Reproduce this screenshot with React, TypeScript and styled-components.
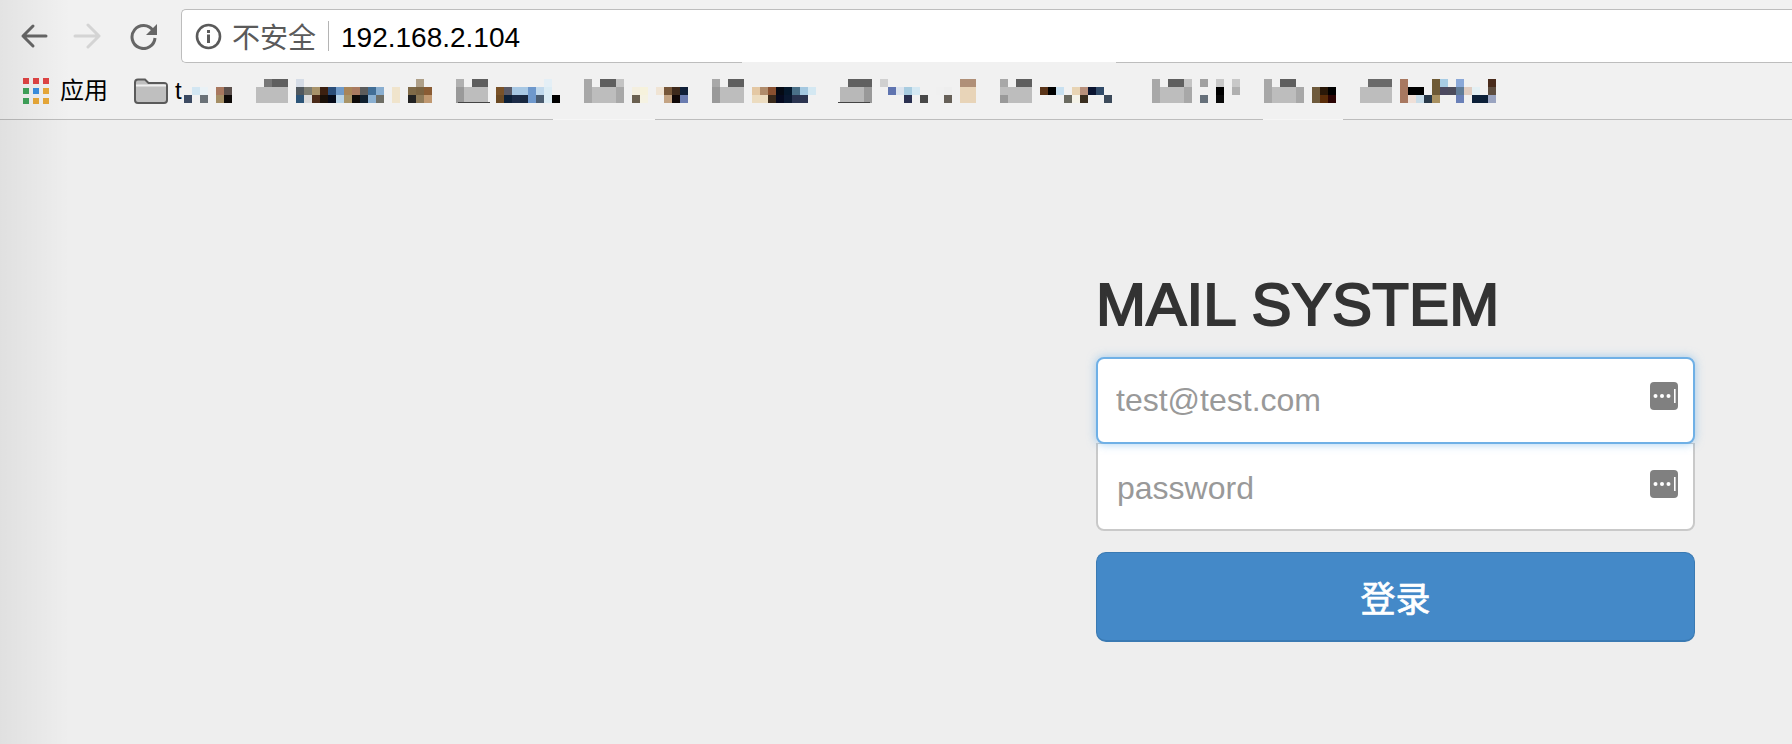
import React, { FunctionComponent } from "react";
import styled, { createGlobalStyle } from "styled-components";

const SANS = `"Liberation Sans", "Noto Sans CJK SC", sans-serif`;

const GlobalStyle = createGlobalStyle`
	html,
	body {
		margin: 0;
		padding: 0;
		height: 100%;
		background: #eeeeee;
		overflow: hidden;
	}
	#root {
		height: 100%;
	}
`;

const Window = styled.div`
	position: relative;
	width: 1792px;
	height: 744px;
	overflow: hidden;
	font-family: ${SANS};
	background: #eeeeee;
`;
const EdgeShade = styled.div`
	position: absolute;
	top: 0;
	left: 0;
	bottom: 0;
	width: 70px;
	background: linear-gradient(to right, rgba(0, 0, 0, 0.06), rgba(0, 0, 0, 0));
	pointer-events: none;
`;
const Chrome = styled.header`
	background: #f1f1f1;
`;
const Toolbar = styled.div`
	display: flex;
	align-items: center;
	height: 72px;
	box-sizing: border-box;
	padding: 9px 0 9px 20px;
`;
const NavButton = styled.span<{ $gap: number }>`
	display: flex;
	margin-right: ${(p) => p.$gap}px;
`;
const AddressBar = styled.div`
	position: relative;
	flex: 1;
	display: flex;
	align-items: center;
	height: 54px;
	box-sizing: border-box;
	padding-left: 13px;
	margin-right: -8px;
	background: #fff;
	border: 1px solid #bdbdbd;
	border-right: none;
	border-radius: 5px 0 0 5px;
`;
const BorderSmudge = styled.span`
	position: absolute;
	left: 560px;
	bottom: -1px;
	width: 374px;
	height: 1px;
	background: #f1f1f1;
`;
const SecurityLabel = styled.span`
	margin-left: 10px;
	font-size: 28px;
	color: #5a5a5a;
`;
const Divider = styled.span`
	width: 1px;
	height: 30px;
	margin: 0 12px;
	background: #b4b4b4;
`;
const UrlText = styled.span`
	margin-top: 3px;
	font-size: 28px;
	color: #000;
`;
const BookmarkBar = styled.div`
	display: flex;
	align-items: center;
	height: 47px;
	box-sizing: border-box;
	padding: 0 0 10px 23px;
`;
const AppsGrid = styled.div`
	display: grid;
	grid-template-columns: repeat(3, 6px);
	grid-auto-rows: 6px;
	gap: 4px;
	margin-right: 11px;
`;
const AppsDot = styled.i<{ $color: string }>`
	display: block;
	background: ${(p) => p.$color};
`;
const BookmarkLabel = styled.span<{ $gap: number }>`
	font-size: 24px;
	line-height: 28px;
	color: #000;
	margin-right: ${(p) => p.$gap}px;
`;
const FolderIcon = styled.svg`
	flex: none;
	margin-right: 7px;
`;
const Pixelated = styled.svg`
	flex: none;
`;
const BottomRule = styled.div`
	display: flex;
	height: 1px;
`;
const RuleSegment = styled.span<{ $width?: number; $gone?: boolean }>`
	flex: ${(p) => (p.$width ? `0 0 ${p.$width}px` : "1")};
	background: ${(p) => (p.$gone ? "#f6f6f6" : "#bdbdbd")};
`;
const Main = styled.main`
	display: flex;
	justify-content: flex-end;
	padding: 152px 97px 0 0;
`;
const SignIn = styled.form`
	width: 599px;
	margin: 0;
`;
const Heading = styled.h2`
	margin: 0 0 19px;
	font-size: 60px;
	line-height: 66px;
	font-weight: 400;
	letter-spacing: 0.2px;
	color: #333;
	-webkit-text-stroke: 2px #333;
`;
const Field = styled.div`
	position: relative;
`;
const Input = styled.input<{ $focused?: boolean }>`
	display: block;
	width: 100%;
	height: ${(p) => (p.$focused ? 87 : 88)}px;
	box-sizing: border-box;
	padding: ${(p) => (p.$focused ? "0 18px" : "4px 19px 0")};
	margin-top: ${(p) => (p.$focused ? 0 : -1)}px;
	font-family: ${SANS};
	font-size: 32px;
	color: #555;
	background: #fff;
	outline: none;
	border: 2px solid ${(p) => (p.$focused ? "#6fb0e6" : "#c9c9c9")};
	border-radius: ${(p) => (p.$focused ? "8px" : "0 0 8px 8px")};
	${(p) =>
		p.$focused
			? "position: relative; z-index: 1; box-shadow: 0 0 10px rgba(102, 175, 233, 0.6);"
			: "border-top-width: 1px;"}
	&::placeholder {
		color: #999;
		opacity: 1;
	}
`;
const KeyBadge = styled.svg<{ $top: number }>`
	position: absolute;
	z-index: 2;
	top: ${(p) => p.$top}px;
	right: 17px;
`;
const SubmitButton = styled.button`
	display: block;
	width: 100%;
	height: 90px;
	margin-top: 21px;
	font-family: ${SANS};
	font-size: 35px;
	font-weight: 400;
	color: #fff;
	-webkit-text-stroke: 0.7px #fff;
	background: #4489c8;
	border: 1px solid #3a7ab3;
	border-bottom-width: 2px;
	border-radius: 10px;
`;

type Cell = [number, number, string];

// x in page pixels, row 0/1/2 of the 8px mosaic, starts at y 78
const MOSAIC_LEFT = 184;
const MOSAIC: Cell[] = [
	[184, 2, "#3c4a62"], [192, 1, "#d2e6f2"], [200, 1, "#eaf2f6"], [200, 2, "#6b7278"],
	[216, 1, "#a9785f"], [216, 2, "#a58f66"], [224, 1, "#5c504c"], [224, 2, "#0e0a08"],
	[264, 0, "#777777"], [272, 0, "#5f5f5f"], [280, 0, "#5f5f5f"],
	[256, 1, "#bdbdbd"], [264, 1, "#bdbdbd"], [272, 1, "#bdbdbd"], [280, 1, "#bdbdbd"],
	[256, 2, "#bdbdbd"], [264, 2, "#bdbdbd"], [272, 2, "#bdbdbd"], [280, 2, "#bdbdbd"],
	[296, 0, "#d5dce6"], [296, 1, "#50585e"], [296, 2, "#2d5578"],
	[304, 1, "#7d7d72"], [304, 2, "#dadada"], [312, 1, "#a8936a"], [312, 2, "#4a2a18"],
	[320, 1, "#3c2010"], [320, 2, "#1a1008"], [328, 1, "#2a4d78"], [328, 2, "#050a18"],
	[336, 1, "#6f9ac8"], [336, 2, "#b8d4e8"], [344, 1, "#a98558"], [344, 2, "#a89468"],
	[352, 1, "#aa7a60"], [352, 2, "#0e0a08"], [360, 1, "#5c5c5c"], [360, 2, "#10202f"],
	[368, 1, "#426e96"], [368, 2, "#8aafd0"], [376, 1, "#89aed0"], [376, 2, "#6e6e66"],
	[392, 1, "#f0e4cc"], [392, 2, "#f0e4cc"], [408, 1, "#7f6a48"], [408, 2, "#222222"],
	[416, 0, "#ae9f88"], [416, 1, "#7a6341"], [416, 2, "#8e7a58"], [424, 1, "#8a5c34"], [424, 2, "#c09870"],
	[456, 0, "#b0b0b0"], [456, 1, "#999999"], [456, 2, "#999999"],
	[464, 1, "#bdbdbd"], [464, 2, "#bdbdbd"], [472, 0, "#5e5e5e"], [472, 1, "#bdbdbd"], [472, 2, "#bdbdbd"],
	[480, 0, "#5e5e5e"], [480, 1, "#bdbdbd"], [480, 2, "#bdbdbd"],
	[496, 1, "#7a5228"], [496, 2, "#6b4a24"], [504, 1, "#5a5a66"], [504, 2, "#0c2038"],
	[512, 1, "#a8c8e4"], [512, 2, "#1c2c48"], [520, 1, "#a8c8e4"], [520, 2, "#182840"],
	[528, 1, "#6e98cc"], [528, 2, "#6e98cc"], [536, 1, "#c0d8ec"], [536, 2, "#4a5c70"],
	[544, 0, "#e4eff6"], [544, 1, "#dcecf4"], [544, 2, "#dcecf4"], [552, 2, "#000000"],
	[584, 0, "#a8a8a8"], [584, 1, "#a8a8a8"], [584, 2, "#a8a8a8"],
	[592, 1, "#bdbdbd"], [592, 2, "#bdbdbd"], [600, 0, "#5f5f5f"], [600, 1, "#bdbdbd"], [600, 2, "#bdbdbd"],
	[608, 0, "#5f5f5f"], [608, 1, "#bdbdbd"], [608, 2, "#bdbdbd"],
	[616, 0, "#c4c4c4"], [616, 1, "#a8a8a8"], [616, 2, "#a8a8a8"],
	[632, 1, "#f4efdf"], [632, 2, "#6a6050"], [640, 1, "#f6f2dc"], [640, 2, "#f5f2e2"],
	[656, 1, "#f0e4d4"], [664, 1, "#77573a"], [664, 2, "#c4a484"], [672, 1, "#3e2a1c"], [672, 2, "#100808"],
	[680, 1, "#102038"], [680, 2, "#6a7cb0"],
	[712, 0, "#a8a8a8"], [712, 1, "#999999"], [712, 2, "#999999"],
	[720, 1, "#bdbdbd"], [720, 2, "#bdbdbd"], [728, 0, "#5f5f5f"], [728, 1, "#bdbdbd"], [728, 2, "#bdbdbd"],
	[736, 0, "#5f5f5f"], [736, 1, "#bdbdbd"], [736, 2, "#bdbdbd"],
	[752, 1, "#e4c8a4"], [752, 2, "#ecdcc0"], [760, 1, "#b08c6c"], [760, 2, "#ecdcc0"],
	[768, 1, "#8a5030"], [768, 2, "#3a2a1c"], [776, 1, "#050a14"], [776, 2, "#050a20"],
	[784, 1, "#05182c"], [784, 2, "#0a1830"], [792, 1, "#4a7088"], [792, 2, "#2a3450"],
	[800, 1, "#a4c8e0"], [800, 2, "#2c3450"], [808, 1, "#d4e8f2"],
	[848, 0, "#606060"], [856, 0, "#606060"], [864, 0, "#606060"],
	[840, 1, "#b8b8b8"], [848, 1, "#b8b8b8"], [856, 1, "#b8b8b8"], [864, 1, "#999999"],
	[840, 2, "#b8b8b8"], [848, 2, "#b8b8b8"], [856, 2, "#b8b8b8"], [864, 2, "#999999"],
	[880, 0, "#d0d0d0"], [888, 1, "#5f74b0"], [896, 1, "#dce4ee"], [904, 1, "#a8cce0"], [904, 2, "#2a3050"],
	[912, 1, "#d4e8f2"], [920, 2, "#484848"], [936, 1, "#f0f0f0"], [944, 2, "#666058"], [944, 1, "#eeeeee"],
	[960, 0, "#b09078"], [960, 1, "#e8d4b8"], [960, 2, "#e8d4b8"], [968, 0, "#b09078"], [968, 1, "#e8d4b8"], [968, 2, "#e8d4b8"],
	[1000, 0, "#a8a8a8"], [1000, 1, "#bdbdbd"], [1000, 2, "#999999"],
	[1008, 1, "#bdbdbd"], [1008, 2, "#bdbdbd"], [1016, 0, "#5f5f5f"], [1016, 1, "#bdbdbd"], [1016, 2, "#bdbdbd"],
	[1024, 0, "#5f5f5f"], [1024, 1, "#bdbdbd"], [1024, 2, "#bdbdbd"],
	[1040, 1, "#5a3418"], [1048, 1, "#000000"], [1056, 1, "#c8e0f0"], [1064, 2, "#6a6a60"],
	[1072, 1, "#e8d4b4"], [1072, 2, "#f4f2e8"], [1080, 1, "#b8907c"], [1080, 2, "#3a2e20"],
	[1088, 1, "#0a1430"], [1096, 1, "#304a68"], [1104, 2, "#3c4a5a"],
	[1152, 0, "#a8a8a8"], [1152, 1, "#a8a8a8"], [1152, 2, "#a8a8a8"],
	[1160, 1, "#bdbdbd"], [1160, 2, "#bdbdbd"], [1168, 0, "#5f5f5f"], [1168, 1, "#bdbdbd"], [1168, 2, "#bdbdbd"],
	[1176, 0, "#5f5f5f"], [1176, 1, "#bdbdbd"], [1176, 2, "#bdbdbd"],
	[1184, 0, "#c4c4c4"], [1184, 1, "#a8a8a8"], [1184, 2, "#a8a8a8"],
	[1200, 0, "#a0a0a0"], [1200, 2, "#66707a"], [1216, 0, "#c8c8c8"], [1216, 1, "#000000"], [1216, 2, "#0a0a0a"],
	[1232, 0, "#c8c8c8"], [1232, 1, "#b0b0b0"],
	[1264, 0, "#a8a8a8"], [1264, 1, "#a8a8a8"], [1264, 2, "#a8a8a8"],
	[1272, 1, "#bdbdbd"], [1272, 2, "#bdbdbd"], [1280, 0, "#5f5f5f"], [1280, 1, "#bdbdbd"], [1280, 2, "#bdbdbd"],
	[1288, 0, "#5f5f5f"], [1288, 1, "#bdbdbd"], [1288, 2, "#bdbdbd"], [1296, 1, "#a8a8a8"], [1296, 2, "#a8a8a8"],
	[1312, 1, "#6e5a3c"], [1312, 2, "#6e5a3c"], [1320, 1, "#2a1808"], [1320, 2, "#5a2c08"], [1328, 1, "#000000"], [1328, 2, "#2a0404"],
	[1368, 0, "#6a6a6a"], [1376, 0, "#6a6a6a"], [1384, 0, "#6a6a6a"],
	[1360, 1, "#bdbdbd"], [1368, 1, "#bdbdbd"], [1376, 1, "#bdbdbd"], [1384, 1, "#bdbdbd"],
	[1360, 2, "#bdbdbd"], [1368, 2, "#bdbdbd"], [1376, 2, "#bdbdbd"], [1384, 2, "#bdbdbd"],
	[1400, 0, "#a87860"], [1400, 1, "#a87860"], [1400, 2, "#a87860"], [1408, 1, "#000000"], [1408, 2, "#efe0d8"],
	[1416, 1, "#000000"], [1416, 2, "#c8dce8"], [1424, 2, "#283848"],
	[1432, 0, "#6e5a36"], [1432, 1, "#6e5a36"], [1432, 2, "#a89060"], [1440, 0, "#a8cce4"], [1440, 1, "#4c4a60"],
	[1448, 1, "#4c4c5c"], [1456, 0, "#8aa8d8"], [1456, 1, "#607c98"], [1456, 2, "#6a80b8"], [1464, 1, "#e0ccc0"],
	[1472, 1, "#e4f0f4"], [1472, 2, "#0c2038"], [1480, 2, "#0c2038"],
	[1488, 0, "#4a2c1c"], [1488, 1, "#5e4e40"], [1488, 2, "#9aa4c0"],
];

const APPS_COLORS = [
	"#e04444", "#e04444", "#e04444",
	"#3fa35a", "#3b8fe0", "#e8a838",
	"#3fa35a", "#e8a838", "#e8a838",
];

const ArrowIcon: FunctionComponent<{ color: string; flip?: boolean }> = ({ color, flip }) => (
	<svg width="28" height="28" viewBox="0 0 28 28" fill="none" stroke={color} strokeWidth="3" strokeLinecap="round" strokeLinejoin="round">
		<path d={flip ? "M2 14h24M15 3l11 11-11 11" : "M26 14H3M13 4 3 14l10 10"} />
	</svg>
);

const ReloadIcon = () => (
	<svg width="28" height="28" viewBox="0 0 28 28" fill="none">
		<path d="M23 8.5A11.5 11.5 0 1 0 25 16" stroke="#666" strokeWidth="3" />
		<path d="M27 2v11H16z" fill="#666" />
	</svg>
);

const InfoIcon = () => (
	<svg width="27" height="27" viewBox="0 0 27 27" fill="none">
		<circle cx="13.5" cy="13.5" r="11.5" stroke="#5a5a5a" strokeWidth="2.6" />
		<rect x="12" y="11.5" width="3" height="8.5" fill="#5a5a5a" />
		<rect x="12" y="7" width="3" height="3" fill="#5a5a5a" />
	</svg>
);

const Folder = () => (
	<FolderIcon width="34" height="26" viewBox="0 0 34 26" fill="none">
		<path d="M1 4.5C1 2.5 2 1.5 4 1.5h7l3.5 3.5H30c2 0 3 1 3 3v14c0 2-1 3-3 3H4c-2 0-3-1-3-3z" fill="#bfbfbf" stroke="#5a5a5a" strokeWidth="2" />
		<path d="M2 7.5h30" stroke="#efefef" strokeWidth="2" />
	</FolderIcon>
);

const KeyIcon: FunctionComponent<{ top: number }> = ({ top }) => (
	<KeyBadge $top={top} width="28" height="28" viewBox="0 0 28 28">
		<rect width="28" height="28" rx="4" fill="#808080" />
		<circle cx="5.5" cy="14" r="2" fill="#fff" />
		<circle cx="12" cy="14" r="2" fill="#fff" />
		<circle cx="18.5" cy="14" r="2" fill="#fff" />
		<rect x="24" y="7" width="1.6" height="14" fill="#fff" />
	</KeyBadge>
);

const BookmarkMosaic = () => (
	<Pixelated width="1316" height="24" viewBox="0 0 1316 24" shapeRendering="crispEdges">
		{MOSAIC.map(([x, row, color]) => (
			<rect key={`${x}-${row}`} x={x - MOSAIC_LEFT} y={row * 8} width="8" height="8" fill={color} />
		))}
		<rect x={458 - MOSAIC_LEFT} y="23" width="32" height="1" fill="#444" />
		<rect x={838 - MOSAIC_LEFT} y="23" width="32" height="1" fill="#444" />
	</Pixelated>
);

const App = () => (
	<Window>
		<GlobalStyle />
		<Chrome>
			<Toolbar>
				<NavButton $gap={25}><ArrowIcon color="#666" /></NavButton>
				<NavButton $gap={29}><ArrowIcon color="#d4d4d4" flip /></NavButton>
				<NavButton $gap={23}><ReloadIcon /></NavButton>
				<AddressBar>
					<InfoIcon />
					<SecurityLabel>不安全</SecurityLabel>
					<Divider />
					<UrlText>192.168.2.104</UrlText>
					<BorderSmudge />
				</AddressBar>
			</Toolbar>
			<BookmarkBar>
				<AppsGrid>
					{APPS_COLORS.map((color, i) => (
						<AppsDot key={i} $color={color} />
					))}
				</AppsGrid>
				<BookmarkLabel $gap={26}>应用</BookmarkLabel>
				<Folder />
				<BookmarkLabel $gap={2}>t</BookmarkLabel>
				<BookmarkMosaic />
			</BookmarkBar>
			<BottomRule>
				<RuleSegment $width={553} />
				<RuleSegment $width={102} $gone />
				<RuleSegment $width={608} />
				<RuleSegment $width={80} $gone />
				<RuleSegment />
			</BottomRule>
		</Chrome>
		<Main>
			<SignIn onSubmit={(e) => e.preventDefault()}>
				<Heading>MAIL SYSTEM</Heading>
				<Field>
					<Input $focused type="email" placeholder="test@test.com" />
					<KeyIcon top={25} />
				</Field>
				<Field>
					<Input type="password" placeholder="password" />
					<KeyIcon top={27} />
				</Field>
				<SubmitButton type="submit">登录</SubmitButton>
			</SignIn>
		</Main>
		<EdgeShade />
	</Window>
);

export default App;
